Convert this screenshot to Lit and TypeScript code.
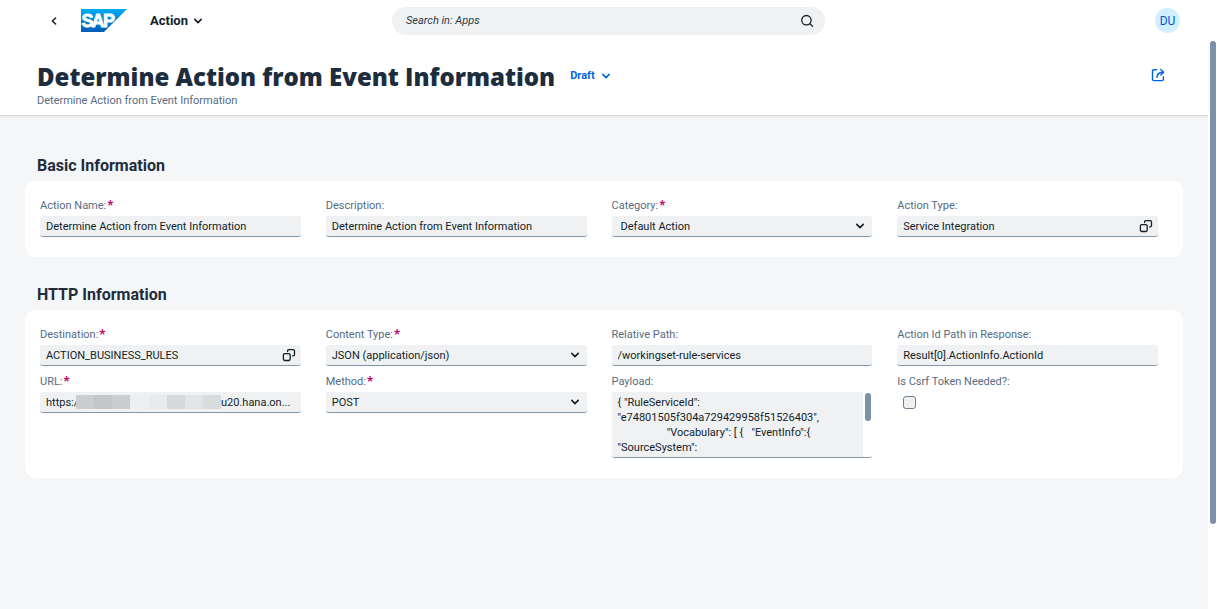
import { LitElement, html, css, nothing, TemplateResult } from "lit";
import { customElement, property } from "lit/decorators.js";

const chevronDown = html`<svg class="chev" viewBox="0 0 10 10" width="10" height="10" aria-hidden="true">
  <path d="M1.8 3.4 L5 6.6 L8.2 3.4" fill="none" stroke="currentColor" stroke-width="1.6" stroke-linecap="round" stroke-linejoin="round" />
</svg>`;

const valueHelp = html`<svg viewBox="0 0 14 14" width="14" height="14" aria-hidden="true">
  <g fill="none" stroke="currentColor" stroke-width="1.3" stroke-linecap="round" stroke-linejoin="round">
    <rect x="1.4" y="5.7" width="6.8" height="6.8" rx="1.4" />
    <path d="M5.6 3.6 V2.9 Q5.6 1.6 6.9 1.6 H11.2 Q12.5 1.6 12.5 2.9 V6.6 Q12.5 7.9 11.2 7.9 H10.7" />
  </g>
</svg>`;

const fieldStyles = css`
  * { box-sizing: border-box; }
  .field { display: flex; flex-direction: column; gap: 2px; min-width: 0; }
  .label { font-size: 11px; line-height: 16px; color: #556b82; white-space: nowrap; }
  .required { color: #ba066c; font-size: 13px; line-height: 1; font-weight: 900; margin-left: 1px; }
  .box {
    display: flex; align-items: center; height: 21px; padding: 0 5px 0 6px;
    background: #eff1f2; border-bottom: 1px solid #8396a8; border-radius: 3px;
    color: #131e29;
  }
  .control {
    flex: 1; min-width: 0; height: 20px; padding: 0; margin: 0; border: 0; outline: 0;
    background: transparent; color: inherit; font: inherit; font-size: 11px;
    appearance: none; border-radius: 0;
  }
  .help { display: flex; padding: 0; border: 0; background: none; color: #131e29; cursor: pointer; }
  .pick { display: grid; flex: 1; align-items: center; }
  .pick > * { grid-area: 1 / 1; }
  .pick .chev { justify-self: end; margin-right: 2px; pointer-events: none; }
  .inset { padding-left: 3px; }
`;

@customElement("form-field")
export class FormField extends LitElement {
  @property() label = "";
  @property() value = "";
  @property() kind = "text";
  @property({ type: Boolean }) required = false;
  @property({ type: Boolean }) inset = false;

  static styles = [
    fieldStyles,
    css`
      :host { display: block; min-width: 0; }
      .start { flex: none; width: 30px; }
      .mosaic { display: flex; flex: none; width: 145px; height: 14px; }
      .tile { flex: 1; }
      .t1 { background: #cbced1; }
      .t2 { background: #c3c7ca; }
      .t3 { background: #eeeff1; }
      .t4 { background: #e9eaec; }
      .t5 { background: #d6d9db; }
      .t6 { background: #e2e4e6; }
      .t7 { background: #d9dcde; }
      .area { display: flex; height: 66px; border-bottom: 1px solid #8396a8; border-radius: 3px; overflow: hidden; }
      .text {
        flex: 1; min-width: 0; margin: 0; border: 0; outline: 0; resize: none; overflow: hidden;
        padding: 3px 6px 0; background: #eff1f2; color: #131e29; font: inherit;
        font-size: 11px; line-height: 15px; white-space: pre-wrap;
      }
      .rail { width: 9px; padding: 1px 1px 0 2px; }
      .thumb { height: 28px; border-radius: 3px; background: #7b91a8; }
      .check {
        appearance: none; display: block; width: 13px; height: 13px; margin: 4px 6px;
        border: 1px solid #6b7f94; border-radius: 3px; background: #eff1f2;
      }
    `,
  ];

  private control(): TemplateResult {
    switch (this.kind) {
      case "select":
        return html`<div class="box"><div class="pick">
          <select id="c" class="control ${this.inset ? "inset" : ""}"><option>${this.value}</option></select>
          ${chevronDown}
        </div></div>`;
      case "help":
        return html`<div class="box">
          <input id="c" class="control" .value=${this.value} />
          <button class="help" aria-label="Open value help">${valueHelp}</button>
        </div>`;
      case "masked":
        return html`<div class="box">
          <input id="c" class="control start" value="https:/" />
          <span class="mosaic" aria-hidden="true">
            ${[1, 2, 1, 3, 4, 5, 6, 7].map((n) => html`<span class="tile t${n}"></span>`)}
          </span>
          <input class="control" aria-label="URL host" .value=${this.value} />
        </div>`;
      case "area":
        return html`<div class="area">
          <textarea id="c" class="text" .value=${this.value}></textarea>
          <div class="rail"><div class="thumb"></div></div>
        </div>`;
      case "check":
        return html`<div><input id="c" class="check" type="checkbox" /></div>`;
      default:
        return html`<div class="box"><input id="c" class="control" .value=${this.value} /></div>`;
    }
  }

  render() {
    return html`<div class="field">
      <label class="label" for="c">${this.label}:${this.required ? html`<span class="required">*</span>` : nothing}</label>
      ${this.control()}
    </div>`;
  }
}

interface Field {
  label: string;
  value?: string;
  kind?: string;
  required?: boolean;
  inset?: boolean;
}

const payload =
  '{ "RuleServiceId":\n"e74801505f304a729429958f51526403",\n                  "Vocabulary": [ {   "EventInfo":{\n"SourceSystem":';

const sections: { title: string; fields: Field[] }[] = [
  {
    title: "Basic Information",
    fields: [
      { label: "Action Name", value: "Determine Action from Event Information", required: true },
      { label: "Description", value: "Determine Action from Event Information" },
      { label: "Category", value: "Default Action", kind: "select", required: true, inset: true },
      { label: "Action Type", value: "Service Integration", kind: "help" },
    ],
  },
  {
    title: "HTTP Information",
    fields: [
      { label: "Destination", value: "ACTION_BUSINESS_RULES", kind: "help", required: true },
      { label: "Content Type", value: "JSON (application/json)", kind: "select", required: true },
      { label: "Relative Path", value: "/workingset-rule-services" },
      { label: "Action Id Path in Response", value: "Result[0].ActionInfo.ActionId" },
      { label: "URL", value: "u20.hana.on...", kind: "masked", required: true },
      { label: "Method", value: "POST", kind: "select", required: true },
      { label: "Payload", value: payload, kind: "area" },
      { label: "Is Csrf Token Needed?", kind: "check" },
    ],
  },
];

@customElement("app-root")
export class AppRoot extends LitElement {
  static styles = css`
    * { box-sizing: border-box; }
    :host {
      display: flex; flex-direction: column; min-height: 100vh; background: #fff;
      font-family: Roboto, "Noto Sans", sans-serif; color: #1d2d3e;
    }
    button { font: inherit; border: 0; padding: 0; background: none; cursor: pointer; color: inherit; }
    .shell {
      display: grid; grid-template-columns: 1fr minmax(0, 433px) 1fr; align-items: center;
      height: 41px; padding: 0 37px;
    }
    .brand { display: flex; align-items: center; padding-left: 9px; }
    .back { display: flex; width: 16px; height: 16px; align-items: center; justify-content: center; }
    .logo { display: block; margin: 0 23px 0 19px; }
    .menu { display: flex; align-items: center; gap: 5px; font-size: 13px; line-height: 18px; font-weight: 700; color: #131e29; }
    .search {
      display: flex; align-items: center; height: 28px; padding: 0 11px 0 14px;
      border-radius: 14px; background: #eff1f2; color: #131e29;
    }
    .query {
      flex: 1; min-width: 0; border: 0; outline: 0; padding: 0; background: transparent;
      font: inherit; font-size: 11px; color: inherit;
    }
    .query::placeholder { color: #2b3a49; font-style: italic; opacity: 1; }
    .find { display: flex; }
    .avatar {
      justify-self: end; width: 25px; height: 25px; border-radius: 50%;
      background: #d1efff; color: #0057d2; font-size: 12px;
    }
    .body { flex: 1; display: flex; }
    .page { flex: 1; min-width: 0; display: flex; flex-direction: column; background: #f5f6f7; }
    .rail { width: 9px; padding: 0 1px 0 2px; }
    .thumb { height: 85%; border-radius: 3px; background: #7b91a8; }
    .top {
      display: flex; align-items: flex-start; padding: 20px 43px 7px 37px;
      background: #fff; border-bottom: 1px solid #d9dcdf; box-shadow: 0 1px 2px #e6e8ea;
    }
    .heading { flex: none; }
    .title {
      margin: 0; font-family: "Open Sans", Roboto, sans-serif;
      font-size: 24px; line-height: 32px; font-weight: 800; white-space: nowrap;
    }
    .subtitle { margin: 0; font-size: 11px; line-height: 15px; color: #556b82; }
    .status {
      display: flex; align-items: center; gap: 6px; margin: 7px auto 0 15px;
      color: #0064d9; font-size: 11px; line-height: 16px; font-weight: 700;
    }
    .share { display: flex; margin-top: 7px; color: #0064d9; }
    .content { padding: 38px 25px 24px; display: flex; flex-direction: column; gap: 26px; }
    .section { display: flex; flex-direction: column; gap: 3px; }
    .name { margin: 0 12px; font-size: 16px; line-height: 24px; font-weight: 700; }
    .card {
      display: grid; grid-template-columns: repeat(4, minmax(0, 1fr)); gap: 8px 25px;
      padding: 17px 25px 20px 15px; border-radius: 10px; background: #fff;
    }
  `;

  render() {
    return html`
      <header class="shell">
        <div class="brand">
          <button class="back" aria-label="Back">
            <svg viewBox="0 0 10 10" width="10" height="10">
              <path d="M6.6 2 L3.4 5 L6.6 8" fill="none" stroke="#131e29" stroke-width="1.5" stroke-linecap="round" stroke-linejoin="round" />
            </svg>
          </button>
          <svg class="logo" viewBox="0 0 46 23" width="46" height="23" role="img" aria-label="SAP">
            <defs>
              <linearGradient id="g" x1="0" y1="0" x2="0" y2="1">
                <stop offset="0" stop-color="#00aeef" />
                <stop offset="1" stop-color="#005cb5" />
              </linearGradient>
            </defs>
            <path d="M0 0 H46 L23 23 H0 Z" fill="url(#g)" />
            <g font-family="Liberation Sans, sans-serif" font-size="18" font-weight="700" fill="#fff" stroke="#fff" stroke-width="0.8">
              <text x="0.5" y="17.5">S</text>
              <text x="10.5" y="17.5">A</text>
              <text x="22" y="17.5">P</text>
            </g>
          </svg>
          <button class="menu">Action ${chevronDown}</button>
        </div>
        <div class="search">
          <input class="query" type="text" aria-label="Search" placeholder="Search in: Apps" />
          <button class="find" aria-label="Search">
            <svg viewBox="0 0 14 14" width="14" height="14">
              <g fill="none" stroke="currentColor" stroke-width="1.3" stroke-linecap="round">
                <circle cx="6.4" cy="6.2" r="4.7" />
                <path d="M9.9 9.7 L12.6 12.4" />
              </g>
            </svg>
          </button>
        </div>
        <button class="avatar" aria-label="User">DU</button>
      </header>
      <div class="body">
        <main class="page">
          <div class="top">
            <div class="heading">
              <h1 class="title">Determine Action from Event Information</h1>
              <p class="subtitle">Determine Action from Event Information</p>
            </div>
            <button class="status">Draft ${chevronDown}</button>
            <button class="share" aria-label="Share">
              <svg viewBox="0 0 14 14" width="14" height="14">
                <g fill="none" stroke="currentColor" stroke-width="1.4" stroke-linecap="round" stroke-linejoin="round">
                  <path d="M5.6 1.7 H2.9 Q1.5 1.7 1.5 3.1 V11.2 Q1.5 12.6 2.9 12.6 H11 Q12.4 12.6 12.4 11.2 V8.6" />
                  <path d="M6 9.4 Q6 4.2 12.4 4.2 M9.8 1.5 L12.6 4.2 L9.8 6.9" />
                </g>
              </svg>
            </button>
          </div>
          <div class="content">
            ${sections.map(
              (s) => html`<section class="section">
                <h2 class="name">${s.title}</h2>
                <div class="card">
                  ${s.fields.map(
                    (f) => html`<form-field
                      .label=${f.label}
                      .value=${f.value ?? ""}
                      .kind=${f.kind ?? "text"}
                      .required=${f.required ?? false}
                      .inset=${f.inset ?? false}
                    ></form-field>`,
                  )}
                </div>
              </section>`,
            )}
          </div>
        </main>
        <div class="rail"><div class="thumb"></div></div>
      </div>
    `;
  }
}
